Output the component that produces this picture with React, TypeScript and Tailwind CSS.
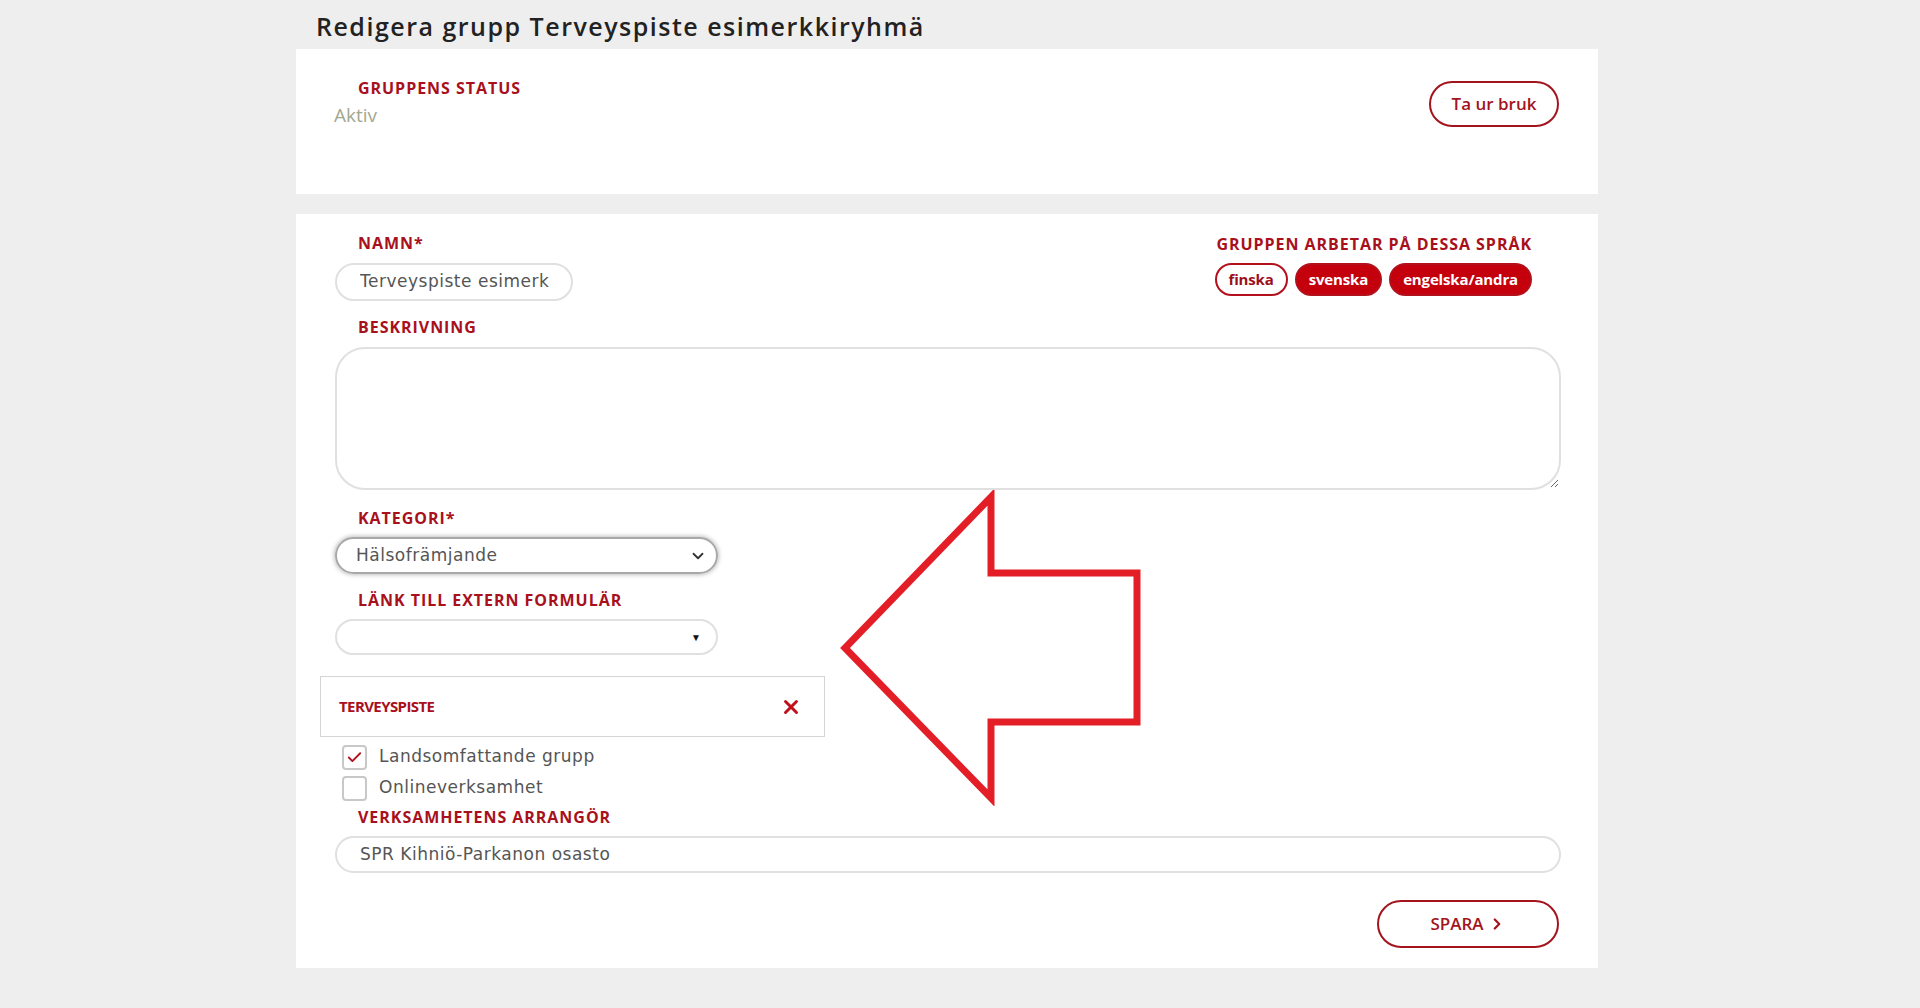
import { Check, ChevronDown, ChevronRight, X } from "lucide-react";

const label =
  "font-['Open_Sans',sans-serif] text-[16px] font-bold uppercase tracking-[0.06em] leading-[20px] text-[#a8101c]";
const body = "font-['DejaVu_Sans',sans-serif] text-[17px] tracking-[0.03em] text-[#555555]";

function Field({ children, className = "" }: { children: React.ReactNode; className?: string }) {
  return (
    <div
      className={`flex items-center rounded-full border-2 border-[#e0e0e0] bg-white ${className}`}
    >
      {children}
    </div>
  );
}

function LangPill({ name, active }: { name: string; active?: boolean }) {
  return (
    <span
      className={`flex h-[33px] items-center rounded-full border-2 border-[#b3101c] px-[12px] font-['Open_Sans',sans-serif] text-[15px] font-bold tracking-[-0.01em] ${
        active ? "bg-[#c4000d] text-white" : "bg-white text-[#9c0f1a]"
      }`}
    >
      {name}
    </span>
  );
}

function CheckRow({ text, checked }: { text: string; checked?: boolean }) {
  return (
    <div className="flex h-[24px] items-center">
      <span className="ml-[7px] flex h-[25px] w-[25px] items-center justify-center rounded-[4px] border-2 border-[#c8c8c8] bg-white">
        {checked && <Check className="h-[17px] w-[17px] text-[#b3101c]" strokeWidth={2.6} />}
      </span>
      <span className={`${body} ml-[12px] text-[#4a4a4a]`}>{text}</span>
    </div>
  );
}

export default function App() {
  return (
    <div className="relative min-h-screen w-full bg-[#eeeeee]">
      <div className="w-[1598px] pl-[296px]">
        <div className="flex h-[49px] items-center pl-[20px] pt-[4px]">
          <h1 className="font-['Open_Sans',sans-serif] text-[25px] font-semibold tracking-[0.06em] text-[#222222]">
            Redigera grupp Terveyspiste esimerkkiryhmä
          </h1>
        </div>

        <div className="flex h-[145px] w-[1302px] items-start justify-between bg-white">
          <div className="pl-[38px] pt-[29px]">
            <div className={`${label} pl-[24px]`}>Gruppens status</div>
            <div className="mt-[3px] font-['Open_Sans',sans-serif] text-[19px] text-[#a3a88f]">Aktiv</div>
          </div>
          <button className="mr-[39px] mt-[32px] flex h-[46px] w-[130px] items-center justify-center rounded-full border-2 border-[#a3141d] font-['Open_Sans',sans-serif] text-[17px] font-semibold text-[#a3141d]">
            Ta ur bruk
          </button>
        </div>

        <div className="mt-[20px] flex h-[754px] w-[1302px] flex-col bg-white pl-[39px] pr-[37px] pt-[19px]">
          <div className="flex items-start justify-between">
            <div>
              <div className={`${label} pl-[23px]`}>Namn*</div>
              <Field className="mt-[10px] h-[38px] w-[238px] pl-[23px] pr-[22px]">
                <input
                  readOnly
                  value="Terveyspiste esimerkkiryhmä"
                  className={`${body} w-full bg-transparent outline-none`}
                />
              </Field>
            </div>
            <div className="mr-[29px] flex flex-col items-end pt-[1px]">
              <div className={label}>Gruppen arbetar på dessa språk</div>
              <div className="mt-[9px] flex gap-[7px]">
                <LangPill name="finska" />
                <LangPill name="svenska" active />
                <LangPill name="engelska/andra" active />
              </div>
            </div>
          </div>

          <div className={`${label} mt-[16px] pl-[23px]`}>Beskrivning</div>
          <textarea className="mt-[10px] h-[143px] w-full rounded-[30px] border-2 border-[#e0e0e0] bg-white outline-none" />

          <div className={`${label} mt-[18px] pl-[23px]`}>Kategori*</div>
          <div className="mt-[9px] flex h-[37px] w-[383px] items-center justify-between rounded-full border-2 border-[#a8a8a8] pl-[19px] pr-[9px] shadow-[0_0_4px_1px_rgba(0,0,0,0.25)]">
            <span className={body}>Hälsofrämjande</span>
            <ChevronDown className="h-[18px] w-[18px] text-[#333333]" strokeWidth={2.4} />
          </div>

          <div className={`${label} mt-[16px] pl-[23px]`}>Länk till extern formulär</div>
          <Field className="mt-[9px] h-[36px] w-[383px] justify-end pr-[15px]">
            <span className="text-[10px] leading-none text-[#111111]">▼</span>
          </Field>

          <div className="-ml-[15px] mt-[21px] flex h-[61px] w-[505px] items-center justify-between border border-[#d4d4d4] pl-[18px] pr-[22px]">
            <span className="font-['Open_Sans',sans-serif] text-[15px] font-bold tracking-[-0.04em] text-[#a8101c]">
              TERVEYSPISTE
            </span>
            <X className="h-[22px] w-[22px] text-[#c0101c]" strokeWidth={3.2} />
          </div>

          <div className="mt-[8px]">
            <CheckRow text="Landsomfattande grupp" checked />
          </div>
          <div className="mt-[7px]">
            <CheckRow text="Onlineverksamhet" />
          </div>

          <div className={`${label} mt-[7px] pl-[23px]`}>Verksamhetens arrangör</div>
          <Field className="mt-[9px] h-[37px] w-full pl-[23px]">
            <span className={body}>SPR Kihniö-Parkanon osasto</span>
          </Field>

          <div className="mt-[27px] flex justify-end pr-[2px]">
            <button className="flex h-[48px] w-[182px] items-center justify-center gap-[4px] rounded-full border-2 border-[#a3141d] font-['Open_Sans',sans-serif] text-[17px] font-semibold text-[#a3141d]">
              SPARA
              <ChevronRight className="h-[18px] w-[18px]" strokeWidth={3} />
            </button>
          </div>
        </div>
      </div>

      <svg
        className="pointer-events-none absolute left-[838px] top-[490px]"
        width="306"
        height="316"
        viewBox="0 0 306 316"
      >
        <polygon
          points="153,7 153,83 299,83 299,232 153,232 153,308 7,158"
          fill="none"
          stroke="#e41e26"
          strokeWidth="7"
          strokeLinejoin="miter"
        />
      </svg>
    </div>
  );
}
